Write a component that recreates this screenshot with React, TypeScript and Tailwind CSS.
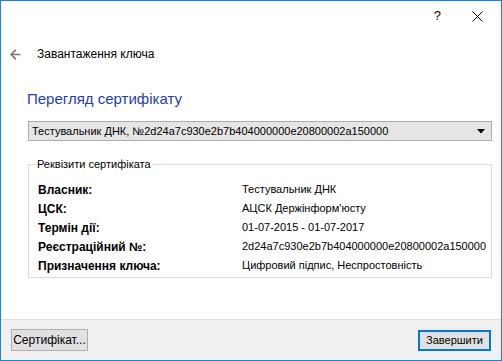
import { ArrowLeft } from 'lucide-react';

const rows: [string, string][] = [
  ['Власник:', 'Тестувальник ДНК'],
  ['ЦСК:', "АЦСК Держінформ'юсту"],
  ['Термін дії:', '01-07-2015 - 01-07-2017'],
  ['Реєстраційний №:', '2d24a7c930e2b7b404000000e20800002a150000'],
  ['Призначення ключа:', 'Цифровий підпис, Неспростовність'],
];

export default function App() {
  return (
    <div
      className="w-[502px] h-[361px] border border-[#1883d7] bg-white flex flex-col text-[11px] text-black"
      style={{ fontFamily: '"Liberation Sans", Arial, sans-serif' }}
    >
      {/* title bar */}
      <div className="h-[30px] flex items-center justify-end shrink-0">
        <span className="text-[13px] mr-[31px]">?</span>
        <svg width="11" height="11" viewBox="0 0 11 11" className="mr-[18px]">
          <path d="M0.5 0.5 L10.5 10.5 M10.5 0.5 L0.5 10.5" stroke="#000" strokeWidth="1" />
        </svg>
      </div>

      <div className="flex items-center h-[18px] mt-[14px]">
        <ArrowLeft className="w-[15px] h-[15px] ml-[7px] text-[#7a7a7a]" strokeWidth={2.6} />
        <span className="ml-[14px] text-[12px]">Завантаження ключа</span>
      </div>

      <div className="flex-1 pl-[27px] pr-[9px]">
        <h1 className="text-[15px] text-[#1f3cb4] mt-[25px] leading-[22px] -ml-[1px]">
          Перегляд сертифікату
        </h1>

        <div className="mt-[11px] h-[20px] border border-[#adadad] bg-[#e5e5e5] flex items-center justify-between pl-[3px] pr-[6px]">
          <span>Тестувальник ДНК, №2d24a7c930e2b7b404000000e20800002a150000</span>
          <svg width="8" height="5" viewBox="0 0 8 5">
            <path d="M0 0 H8 L4 4.5 Z" fill="#000" />
          </svg>
        </div>

        <fieldset className="min-w-0 mt-[16px] border border-[#dcdcdc] px-[9px] pb-[6px] pt-0 h-[121px]">
          <legend className="px-[1px] ml-[-2px] leading-[14px]">Реквізити сертифіката</legend>
          <div className="mt-[9px] flex flex-col">
            {rows.map(([label, value]) => (
              <div key={label} className="flex h-[19px] items-center">
                <span className="w-[204px] shrink-0 font-bold text-[12px]">{label}</span>
                <span className="whitespace-nowrap">{value}</span>
              </div>
            ))}
          </div>
        </fieldset>
      </div>

      {/* footer */}
      <div className="h-[41px] shrink-0 bg-[#f0f0f0] border-t border-[#dfdfdf] flex items-center justify-between px-[10px]">
        <button className="h-[22px] w-[77px] border border-[#adadad] bg-[#e1e1e1] text-[12px] leading-none">
          Сертифікат...
        </button>
        <button className="h-[21px] w-[73px] border-2 border-[#0078d7] bg-[#e1e1e1] text-[11px] leading-none">
          Завершити
        </button>
      </div>
    </div>
  );
}
